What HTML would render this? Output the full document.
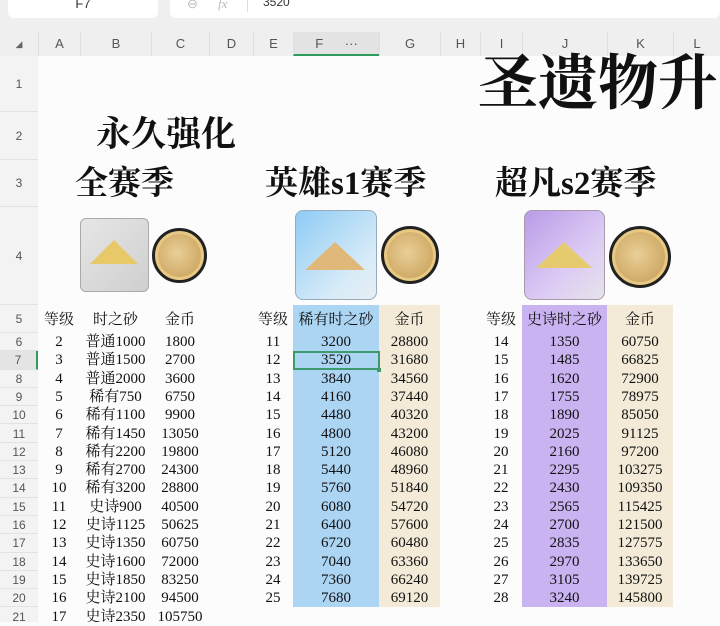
<!DOCTYPE html>
<html><head><meta charset="utf-8"><style>
*{margin:0;padding:0;box-sizing:border-box}
body{width:720px;height:622px;overflow:hidden;background:#fcfcfc;position:relative;font-family:"Liberation Serif","Noto Serif CJK SC",serif;color:#111}
.abs{position:absolute}
.top{left:0;top:0;width:720px;height:32px;background:#f0f0f0}
.box{background:#fff;border-radius:6px;top:-6px;height:24px}
.hdr{left:0;top:32px;width:720px;height:24px;background:#efefef;font-family:"Liberation Sans",sans-serif;font-size:13px;color:#555}
.hdr span{position:absolute;text-align:center;border-left:1px solid #e0e0e0;height:24px;top:0;line-height:24px}
.rh{left:0;top:56px;width:38px;height:566px;background:#f3f3f3;font-family:"Liberation Sans",sans-serif;font-size:12px;color:#555}
.rh div{position:absolute;left:0;width:38px;text-align:center;border-bottom:1px solid #e2e2e2}
.r{position:absolute;left:0;width:720px;height:18.3px;font-size:15px;line-height:18.3px}
.r span{position:absolute;text-align:center;white-space:nowrap}
.a{left:38px;width:42px}.b{left:80px;width:71px}.c{left:151px;width:58px}
.e{left:253px;width:40px}.f{left:293px;width:86px}.g{left:379px;width:61px}
.i{left:480px;width:42px}.j{left:522px;width:85px}.k{left:607px;width:66px}
.t{font-weight:bold;font-family:"Liberation Serif","Noto Serif CJK SC",serif;white-space:nowrap}
.coin{border-radius:50%;background:radial-gradient(circle at 45% 45%,#e9cf97,#d2ad6a 60%,#b98f47);border:3px solid #222;box-shadow:inset 0 0 0 3px #e8c983}
</style></head><body>
<div class="abs top"></div>
<div class="abs box" style="left:8px;width:150px"></div>
<div class="abs" style="left:8px;width:150px;top:-4px;text-align:center;font-family:'Liberation Sans',sans-serif;font-size:13px;color:#333">F7</div>
<div class="abs box" style="left:170px;width:550px"></div>
<div class="abs" style="left:187px;top:-4px;font-size:13px;color:#bbb;font-family:'Liberation Sans',sans-serif">⊖</div>
<div class="abs" style="left:218px;top:-4px;font-size:13px;color:#bbb;font-style:italic">fx</div>
<div class="abs" style="left:247px;top:0;width:1px;height:12px;background:#ddd"></div>
<div class="abs" style="left:263px;top:-5px;font-size:12px;color:#333;font-family:'Liberation Sans',sans-serif">3520</div>

<div class="abs hdr">
<span style="left:0;width:38px;border:none;font-size:9px;color:#666">◢</span>
<span style="left:38px;width:42px">A</span><span style="left:80px;width:71px">B</span><span style="left:151px;width:58px">C</span><span style="left:209px;width:44px">D</span><span style="left:253px;width:40px">E</span>
<span style="left:293px;width:86px;background:#e3e3e3;border-bottom:2px solid #2e9a5e">F <span style="position:static;border:none;margin-left:18px">···</span></span>
<span style="left:379px;width:61px">G</span><span style="left:440px;width:40px">H</span><span style="left:480px;width:42px">I</span><span style="left:522px;width:85px">J</span><span style="left:607px;width:66px">K</span><span style="left:673px;width:47px">L</span>
</div>
<div class="abs rh">
<div style="top:0;height:56px;line-height:56px">1</div>
<div style="top:56px;height:48px;line-height:48px">2</div>
<div style="top:104px;height:47px;line-height:47px">3</div>
<div style="top:151px;height:98px;line-height:98px">4</div>
<div style="top:249px;height:28px;line-height:28px">5</div>
<div style="top:277px;height:18.3px;line-height:18px">6</div>
<div style="top:295.3px;height:18.3px;line-height:18px;background:#e4e4e4;border-right:2px solid #2e9a5e">7</div>
<div style="top:313.6px;height:18.3px;line-height:18px">8</div>
<div style="top:331.9px;height:18.3px;line-height:18px">9</div>
<div style="top:350.2px;height:18.3px;line-height:18px">10</div>
<div style="top:368.5px;height:18.3px;line-height:18px">11</div>
<div style="top:386.8px;height:18.3px;line-height:18px">12</div>
<div style="top:405.1px;height:18.3px;line-height:18px">13</div>
<div style="top:423.4px;height:18.3px;line-height:18px">14</div>
<div style="top:441.7px;height:18.3px;line-height:18px">15</div>
<div style="top:460px;height:18.3px;line-height:18px">16</div>
<div style="top:478.3px;height:18.3px;line-height:18px">17</div>
<div style="top:496.6px;height:18.3px;line-height:18px">18</div>
<div style="top:514.9px;height:18.3px;line-height:18px">19</div>
<div style="top:533.2px;height:18.3px;line-height:18px">20</div>
<div style="top:551.5px;height:14.5px;line-height:18px;border:none">21</div>
</div>

<div class="abs" style="left:293px;top:305px;width:86px;height:302px;background:#acd5f3"></div>
<div class="abs" style="left:379px;top:305px;width:61px;height:302px;background:#f3ebd8"></div>
<div class="abs" style="left:522px;top:305px;width:85px;height:302px;background:#cab3f1"></div>
<div class="abs" style="left:607px;top:305px;width:66px;height:302px;background:#f3ebd8"></div>

<div class="abs" style="left:470px;top:44px;width:250px;height:80px;overflow:hidden"><div class="abs t" style="left:8px;top:0;font-size:60px;line-height:80px">圣遗物升</div></div>
<div class="abs t" style="left:96px;top:113px;font-size:35px;line-height:44px">永久强化</div>
<div class="abs t" style="left:75px;top:163px;font-size:33px;line-height:42px">全赛季</div>
<div class="abs t" style="left:265px;top:163px;font-size:33px;line-height:42px">英雄s1赛季</div>
<div class="abs t" style="left:495px;top:163px;font-size:33px;line-height:42px">超凡s2赛季</div>

<div class="abs" style="left:80px;top:218px;width:69px;height:74px;border-radius:6px;background:linear-gradient(135deg,#e6e6e6,#cfcfcf);border:1px solid #aaa"></div>
<div class="abs" style="left:90px;top:240px;width:0;height:0;border-left:24px solid transparent;border-right:24px solid transparent;border-bottom:24px solid #e8c868"></div>
<div class="abs coin" style="left:152px;top:228px;width:55px;height:55px"></div>
<div class="abs" style="left:295px;top:210px;width:82px;height:90px;border-radius:8px;background:linear-gradient(135deg,#8ecbf5,#d6ebf8 70%,#e8eef2);border:1px solid #9ab"></div>
<div class="abs" style="left:305px;top:242px;width:0;height:0;border-left:30px solid transparent;border-right:30px solid transparent;border-bottom:28px solid #e0b97a"></div>
<div class="abs coin" style="left:381px;top:226px;width:58px;height:58px"></div>
<div class="abs" style="left:524px;top:210px;width:81px;height:90px;border-radius:8px;background:linear-gradient(135deg,#b99be8,#dccbf4 60%,#e6e3ea);border:1px solid #a9a"></div>
<div class="abs" style="left:536px;top:242px;width:0;height:0;border-left:28px solid transparent;border-right:28px solid transparent;border-bottom:26px solid #e6cb6e"></div>
<div class="abs coin" style="left:609px;top:226px;width:62px;height:62px"></div>

<div class="r" style="top:311px"><span class="a">等级</span><span class="b">时之砂</span><span class="c">金币</span><span class="e">等级</span><span class="f">稀有时之砂</span><span class="g">金币</span><span class="i">等级</span><span class="j">史诗时之砂</span><span class="k">金币</span></div>

<div class="r" style="top:333px"><span class="a">2</span><span class="b">普通1000</span><span class="c">1800</span><span class="e">11</span><span class="f">3200</span><span class="g">28800</span><span class="i">14</span><span class="j">1350</span><span class="k">60750</span></div>
<div class="r" style="top:351.3px"><span class="a">3</span><span class="b">普通1500</span><span class="c">2700</span><span class="e">12</span><span class="f">3520</span><span class="g">31680</span><span class="i">15</span><span class="j">1485</span><span class="k">66825</span></div>
<div class="r" style="top:369.6px"><span class="a">4</span><span class="b">普通2000</span><span class="c">3600</span><span class="e">13</span><span class="f">3840</span><span class="g">34560</span><span class="i">16</span><span class="j">1620</span><span class="k">72900</span></div>
<div class="r" style="top:387.9px"><span class="a">5</span><span class="b">稀有750</span><span class="c">6750</span><span class="e">14</span><span class="f">4160</span><span class="g">37440</span><span class="i">17</span><span class="j">1755</span><span class="k">78975</span></div>
<div class="r" style="top:406.2px"><span class="a">6</span><span class="b">稀有1100</span><span class="c">9900</span><span class="e">15</span><span class="f">4480</span><span class="g">40320</span><span class="i">18</span><span class="j">1890</span><span class="k">85050</span></div>
<div class="r" style="top:424.5px"><span class="a">7</span><span class="b">稀有1450</span><span class="c">13050</span><span class="e">16</span><span class="f">4800</span><span class="g">43200</span><span class="i">19</span><span class="j">2025</span><span class="k">91125</span></div>
<div class="r" style="top:442.8px"><span class="a">8</span><span class="b">稀有2200</span><span class="c">19800</span><span class="e">17</span><span class="f">5120</span><span class="g">46080</span><span class="i">20</span><span class="j">2160</span><span class="k">97200</span></div>
<div class="r" style="top:461.1px"><span class="a">9</span><span class="b">稀有2700</span><span class="c">24300</span><span class="e">18</span><span class="f">5440</span><span class="g">48960</span><span class="i">21</span><span class="j">2295</span><span class="k">103275</span></div>
<div class="r" style="top:479.4px"><span class="a">10</span><span class="b">稀有3200</span><span class="c">28800</span><span class="e">19</span><span class="f">5760</span><span class="g">51840</span><span class="i">22</span><span class="j">2430</span><span class="k">109350</span></div>
<div class="r" style="top:497.7px"><span class="a">11</span><span class="b">史诗900</span><span class="c">40500</span><span class="e">20</span><span class="f">6080</span><span class="g">54720</span><span class="i">23</span><span class="j">2565</span><span class="k">115425</span></div>
<div class="r" style="top:516px"><span class="a">12</span><span class="b">史诗1125</span><span class="c">50625</span><span class="e">21</span><span class="f">6400</span><span class="g">57600</span><span class="i">24</span><span class="j">2700</span><span class="k">121500</span></div>
<div class="r" style="top:534.3px"><span class="a">13</span><span class="b">史诗1350</span><span class="c">60750</span><span class="e">22</span><span class="f">6720</span><span class="g">60480</span><span class="i">25</span><span class="j">2835</span><span class="k">127575</span></div>
<div class="r" style="top:552.6px"><span class="a">14</span><span class="b">史诗1600</span><span class="c">72000</span><span class="e">23</span><span class="f">7040</span><span class="g">63360</span><span class="i">26</span><span class="j">2970</span><span class="k">133650</span></div>
<div class="r" style="top:570.9px"><span class="a">15</span><span class="b">史诗1850</span><span class="c">83250</span><span class="e">24</span><span class="f">7360</span><span class="g">66240</span><span class="i">27</span><span class="j">3105</span><span class="k">139725</span></div>
<div class="r" style="top:589.2px"><span class="a">16</span><span class="b">史诗2100</span><span class="c">94500</span><span class="e">25</span><span class="f">7680</span><span class="g">69120</span><span class="i">28</span><span class="j">3240</span><span class="k">145800</span></div>
<div class="r" style="top:607.5px;height:14.5px;overflow:hidden"><span class="a">17</span><span class="b">史诗2350</span><span class="c">105750</span></div>

<div class="abs" style="left:293px;top:351px;width:87px;height:19px;border:2px solid #3d9a6a"></div>
<div class="abs" style="left:377px;top:368px;width:4px;height:4px;background:#3d9a6a"></div>
</body></html>
